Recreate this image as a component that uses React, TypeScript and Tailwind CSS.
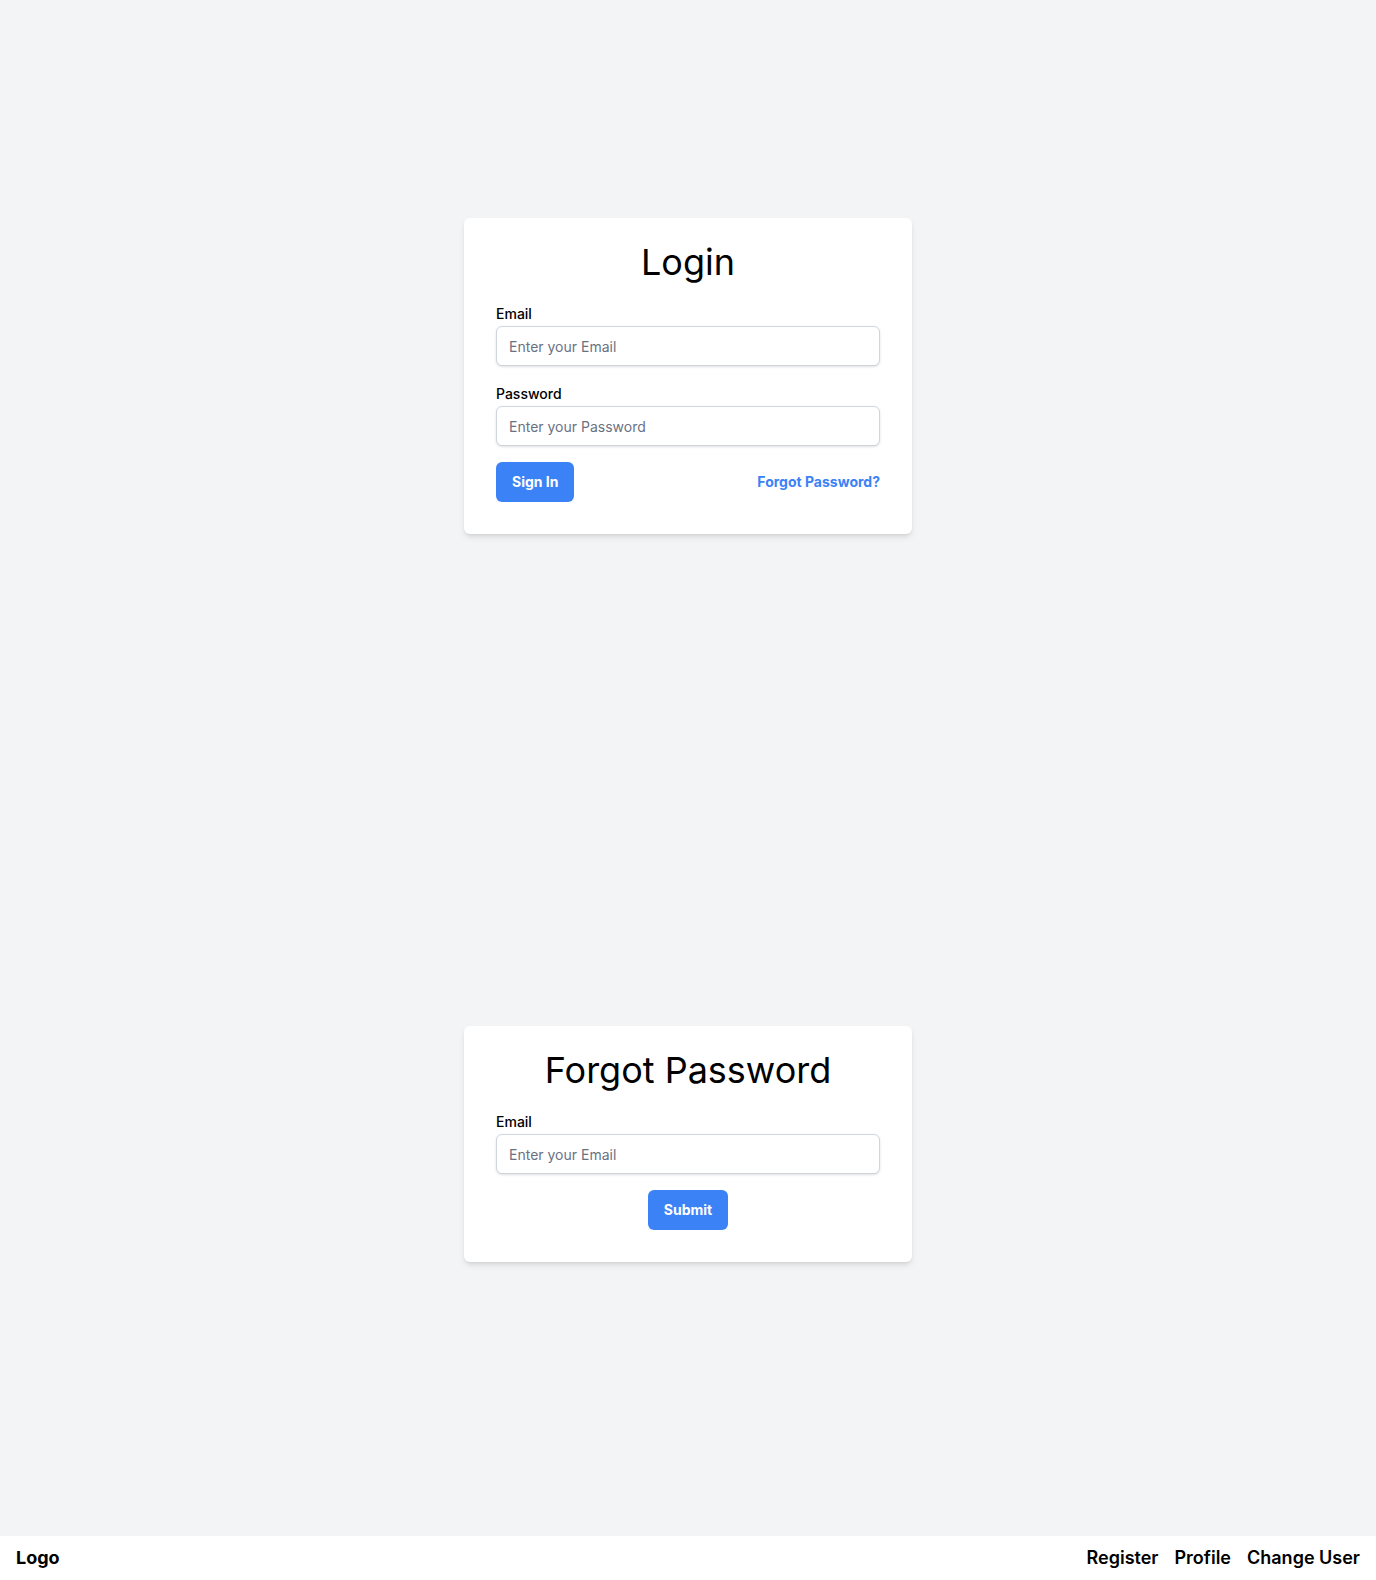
const inputClass =
  "block h-10 w-full rounded-md border border-gray-300 bg-white px-3 text-sm text-gray-900 shadow-sm placeholder:text-gray-500 focus:outline-none";

const Field = ({ label, type, placeholder }: { label: string; type: string; placeholder: string }) => (
  <div>
    <label className="block text-sm leading-6 font-medium text-black">{label}</label>
    <input type={type} placeholder={placeholder} className={inputClass} />
  </div>
);

const Login = () => (
  <div className="w-[448px] rounded-md bg-white px-8 pt-6 pb-8 shadow-md">
    <h1 className="mb-5 text-center text-4xl font-normal text-black">Login</h1>
    <div className="mb-4">
      <Field label="Email" type="email" placeholder="Enter your Email" />
    </div>
    <div className="mb-4">
      <Field label="Password" type="password" placeholder="Enter your Password" />
    </div>
    <div className="flex items-center justify-between">
      <button className="h-10 rounded-md bg-[#3b82f6] px-4 text-sm font-bold text-white">Sign In</button>
      <a href="#" className="text-sm font-bold text-[#3b82f6]">
        Forgot Password?
      </a>
    </div>
  </div>
);

const ForgotPassword = () => (
  <div className="w-[448px] rounded-md bg-white px-8 pt-6 pb-8 shadow-md">
    <h1 className="mb-5 text-center text-4xl font-normal text-black">Forgot Password</h1>
    <div className="mb-4">
      <Field label="Email" type="email" placeholder="Enter your Email" />
    </div>
    <div className="flex justify-center">
      <button className="h-10 rounded-md bg-[#3b82f6] px-4 text-sm font-bold text-white">Submit</button>
    </div>
  </div>
);

export default function App() {
  return (
    <div className="flex min-h-screen flex-col bg-gray-100 font-['Inter',sans-serif]">
      <main className="flex flex-col">
        <section className="flex h-[768px] items-center justify-center pb-4">
          <Login />
        </section>
        <section className="flex h-[768px] items-center justify-center pb-4">
          <ForgotPassword />
        </section>
      </main>
      <nav className="flex items-center justify-between bg-white px-4 py-2">
        <span className="text-lg font-bold text-black">Logo</span>
        <div className="flex gap-4 text-lg font-semibold text-black">
          <a href="#">Register</a>
          <a href="#">Profile</a>
          <a href="#">Change User</a>
        </div>
      </nav>
    </div>
  );
}
